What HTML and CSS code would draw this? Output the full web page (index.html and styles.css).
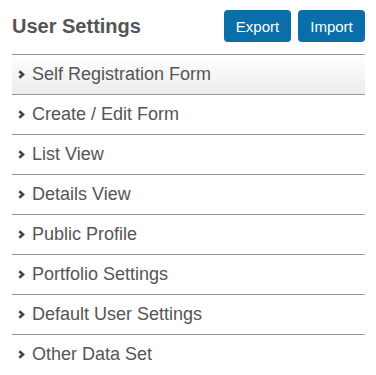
FILE: index.html
```html
<!DOCTYPE html>
<html>
<head>
  <meta charset="UTF-8">
  <title>User Settings</title>
  <link rel="stylesheet" href="styles.css">
</head>
<body>
  <div class="container">
    <div class="header">
      <h2>User Settings</h2>
      <div class="btn-group">
        <button class="btn-export">Export</button>
        <button class="btn-import">Import</button>
      </div>
    </div>

    <div class="section-list">
      <div class="section-item active">
        <svg class="chevron" width="7" height="9" viewBox="0 0 7 9"><polyline points="1.3,1.2 5,4.5 1.3,7.8" /></svg>
        <span>Self Registration Form</span>
      </div>
      <div class="section-item">
        <svg class="chevron" width="7" height="9" viewBox="0 0 7 9"><polyline points="1.3,1.2 5,4.5 1.3,7.8" /></svg>
        <span>Create / Edit Form</span>
      </div>
      <div class="section-item">
        <svg class="chevron" width="7" height="9" viewBox="0 0 7 9"><polyline points="1.3,1.2 5,4.5 1.3,7.8" /></svg>
        <span>List View</span>
      </div>
      <div class="section-item">
        <svg class="chevron" width="7" height="9" viewBox="0 0 7 9"><polyline points="1.3,1.2 5,4.5 1.3,7.8" /></svg>
        <span>Details View</span>
      </div>
      <div class="section-item">
        <svg class="chevron" width="7" height="9" viewBox="0 0 7 9"><polyline points="1.3,1.2 5,4.5 1.3,7.8" /></svg>
        <span>Public Profile</span>
      </div>
      <div class="section-item">
        <svg class="chevron" width="7" height="9" viewBox="0 0 7 9"><polyline points="1.3,1.2 5,4.5 1.3,7.8" /></svg>
        <span>Portfolio Settings</span>
      </div>
      <div class="section-item">
        <svg class="chevron" width="7" height="9" viewBox="0 0 7 9"><polyline points="1.3,1.2 5,4.5 1.3,7.8" /></svg>
        <span>Default User Settings</span>
      </div>
      <div class="section-item">
        <svg class="chevron" width="7" height="9" viewBox="0 0 7 9"><polyline points="1.3,1.2 5,4.5 1.3,7.8" /></svg>
        <span>Other Data Set</span>
      </div>
    </div>
  </div>
</body>
</html>
```

FILE: styles.css
```css
body {
  font-family: "Liberation Sans", Arial, sans-serif;
  margin: 0;
  background-color: white;
  color: #555;
}
.container {
  width: 353px;
  padding: 10px 0 0 12px;
}
.header {
  display: flex;
  justify-content: space-between;
  align-items: center;
  margin-bottom: 12px;
}
h2 {
  margin: 0;
  font-size: 20px;
  font-weight: bold;
  color: #555;
}
.btn-group {
  display: flex;
  gap: 7px;
}
button {
  font-family: "Liberation Sans", Arial, sans-serif;
  font-size: 15px;
  height: 32px;
  width: 67px;
  padding: 0;
  border: none;
  border-radius: 4px;
  cursor: pointer;
  color: white;
  background-color: #0a6ea8;
}
.section-item {
  display: flex;
  align-items: center;
  height: 39px;
  border-top: 1px solid #999;
  padding-left: 6px;
  font-size: 18px;
  color: #555;
}
.section-item.active {
  background: linear-gradient(#fff, #ececec);
}
.chevron {
  margin-right: 7px;
  fill: none;
  stroke: #444;
  stroke-width: 2.6;
}
```
